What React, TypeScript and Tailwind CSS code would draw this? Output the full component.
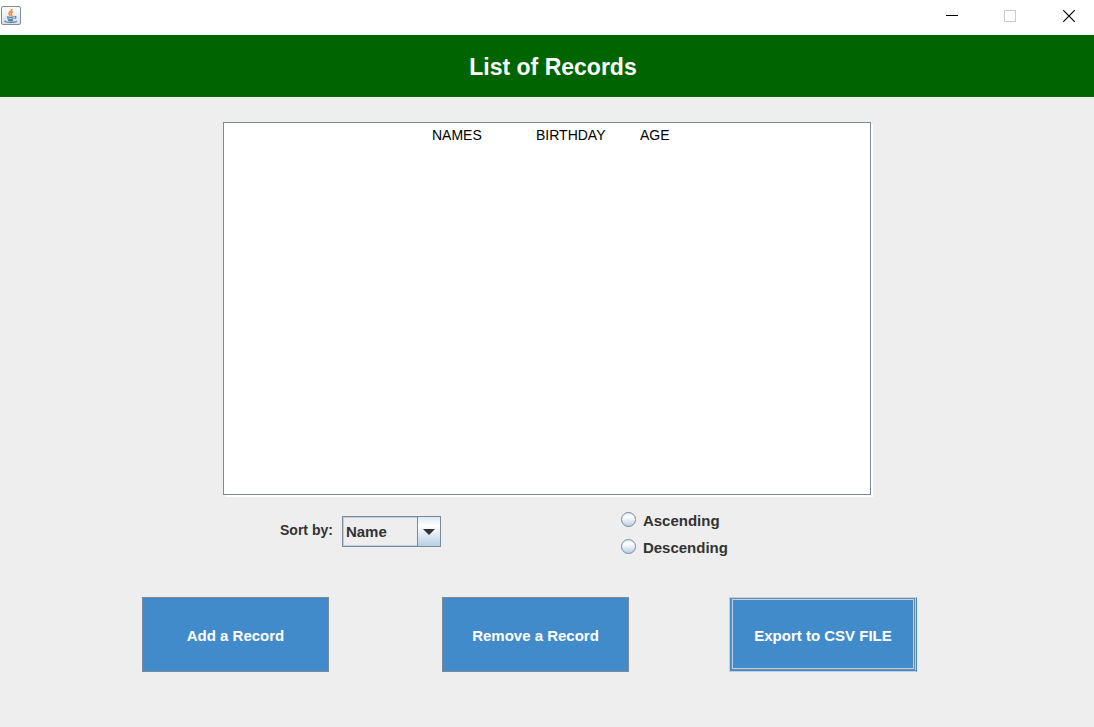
import React, { useState } from 'react';

function JavaIcon() {
  return (
    <svg width="20" height="20" viewBox="0 0 20 20" aria-hidden="true">
      <defs>
        <linearGradient id="java-bg" x1="0" y1="0" x2="0" y2="1">
          <stop offset="0" stopColor="#ffffff" />
          <stop offset="1" stopColor="#d5dfe8" />
        </linearGradient>
      </defs>
      <rect x="0.5" y="0.5" width="19" height="18" rx="1.5" fill="url(#java-bg)" stroke="#7b8f9f" />
      <path d="M10.800 3c.8 2-3.400 2.700-2.800 4.700.2.800 1.100 1.500 1.300 2.300M12 5.800c-2.400 1-2.200 1.700-1.400 2.700.4.600.1 1.100-.3 1.500" fill="none" stroke="#ee8b3a" strokeWidth="1.500" />
      <path d="M5.800 10.800c1.200.7 5.700.7 7.200 0M6.300 12.500c1.500.8 4.700.8 6.200 0M7 14.200c1.200.5 3.700.5 5.100 0M13.300 10.500c2-.6 2.400 1.600.1 2.300M4.500 14.700c-1.500.6-.4 1.600 5.500 1.600 4.500 0 6-.7 5.500-1.400" fill="none" stroke="#57809f" strokeWidth="1.200" />
    </svg>
  );
}

function TitleBar() {
  return (
    <div className="flex h-[35px] items-start justify-between bg-white">
      <div className="px-px pt-[6px]">
        <JavaIcon />
      </div>
      <div className="flex h-8">
        <button type="button" aria-label="Minimize" className="flex w-[58px] items-center justify-center">
          <svg width="12" height="12" viewBox="0 0 12 12" shapeRendering="crispEdges">
            <path d="M0 5.500h12" stroke="#000" />
          </svg>
        </button>
        <button type="button" aria-label="Maximize" disabled className="flex w-[58px] items-center justify-center">
          <svg width="12" height="12" viewBox="0 0 12 12" shapeRendering="crispEdges">
            <rect x="0.500" y="0.500" width="11" height="11" fill="none" stroke="#ccc" />
          </svg>
        </button>
        <button type="button" aria-label="Close" className="flex w-[55px] items-center justify-center pl-[5px]">
          <svg width="12" height="12" viewBox="0 0 12 12">
            <path d="M.3.3l11.400 11.400M11.700.3L.3 11.700" stroke="#000" strokeWidth="1.200" />
          </svg>
        </button>
      </div>
    </div>
  );
}

function OrderOption({ label, checked, onSelect }: { label: string; checked: boolean; onSelect: () => void }) {
  return (
    <label className="flex h-[27px] items-start gap-[7px]">
      <input
        type="radio"
        name="order"
        checked={checked}
        onChange={onSelect}
        className="mt-1 size-[15px] appearance-none rounded-full border border-[#7a8a99] bg-linear-to-b from-[#dde8f3] via-white via-30% to-[#b8cfe5] checked:border-4"
      />
      <span className="pt-1">{label}</span>
    </label>
  );
}

const actionClass = 'h-[75px] w-[187px] border border-[#7a8a99] bg-[#428bca] pt-0.5 text-white';

export default function App() {
  const [order, setOrder] = useState('');
  return (
    <div className="flex min-h-screen flex-col bg-[#eeeeee] font-['Liberation_Sans',Arial,sans-serif] text-[15px] leading-[18px] font-bold text-[#333333]">
      <TitleBar />
      <header className="flex h-[62px] items-center justify-center bg-[#006400] pt-[2px] pl-3">
        <h1 className="text-[23px] leading-7 text-white">List of Records</h1>
      </header>
      <main className="flex flex-col px-[142px] pt-[25px] pb-[55px]">
        <div className="mx-auto h-[373px] w-full max-w-[648px] border border-[#7a8a99] bg-white pt-[3px] pl-[208px] shadow-[2px_2px_0_#ffffff]">
          <table className="table-fixed text-left text-[14px] leading-[18px] text-black">
            <thead>
              <tr>
                <th className="w-[104px] p-0 font-normal">NAMES</th>
                <th className="w-[104px] p-0 font-normal">BIRTHDAY</th>
                <th className="w-[40px] p-0 font-normal">AGE</th>
              </tr>
            </thead>
            <tbody />
          </table>
        </div>

        <div className="mx-auto flex w-full max-w-[648px] items-start pt-[12px] pl-[57px]">
          <div className="flex items-center gap-[9px] pt-[9px]">
            <label htmlFor="sort" className="pb-1 text-[14px]">Sort by:</label>
            <div className="grid h-[31px] w-[99px] grid-cols-[1fr_23px] border border-[#7a8a99]">
              <select
                id="sort"
                className="col-span-2 col-start-1 row-start-1 appearance-none border border-[#b8cfe5] bg-[#eeeeee] pl-[2px] outline-none"
              >
                <option>Name</option>
                <option>Birthday</option>
                <option>Age</option>
              </select>
              <span className="pointer-events-none z-10 col-start-2 row-start-1 flex items-center justify-center border-l border-[#7a8a99] bg-linear-to-b from-[#dde8f3] via-white via-30% to-[#b8cfe5]">
                <svg width="12" height="6" viewBox="0 0 12 6" aria-hidden="true">
                  <path d="M0 0h12L6 6z" fill="#333" />
                </svg>
              </span>
            </div>
          </div>
          <fieldset className="ml-[180px] pt-px">
            <OrderOption label="Ascending" checked={order === 'asc'} onSelect={() => setOrder('asc')} />
            <OrderOption label="Descending" checked={order === 'desc'} onSelect={() => setOrder('desc')} />
          </fieldset>
        </div>

        <div className="flex pt-[35px]">
          <button type="button" className={actionClass}>Add a Record</button>
          <button type="button" className={`ml-[113px] ${actionClass}`}>Remove a Record</button>
          <button
            type="button"
            className="ml-[100px] flex h-[75px] w-[188px] border border-[#b8cfe5] border-r-[#428bca] bg-[#428bca] pb-px pl-px text-white"
          >
            <span className="flex flex-1 self-stretch border-r border-[#b8cfe5]">
              <span className="flex flex-1 border border-[#7a8a99]">
                <span className="flex flex-1 items-center justify-center border border-[#b8cfe5] pt-1">
                  Export to CSV FILE
                </span>
              </span>
            </span>
          </button>
        </div>
      </main>
    </div>
  );
}
